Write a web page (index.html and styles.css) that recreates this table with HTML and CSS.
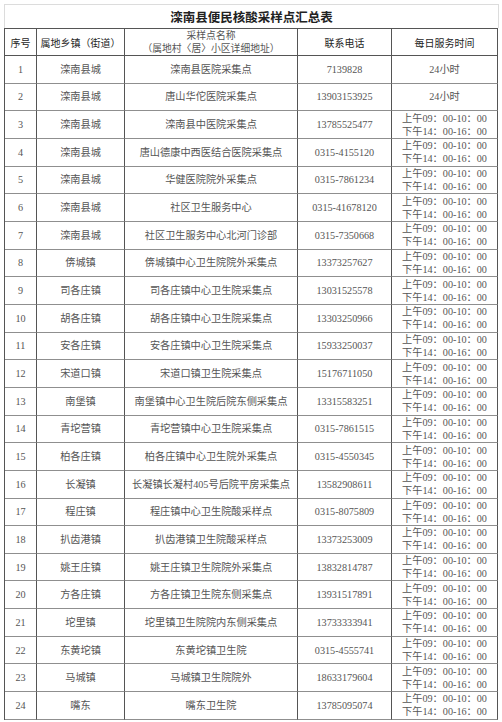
FILE: index.html
```html
<!DOCTYPE html>
<html lang="zh-CN">
<head>
<meta charset="utf-8">
<title>滦南县便民核酸采样点汇总表</title>
<link rel="stylesheet" href="styles.css">
</head>
<body>
<div class="sheet">
  <div class="title">滦南县便民核酸采样点汇总表</div>
  <div class="table">
    <div class="cell head">序号</div>
    <div class="cell head">属地乡镇（街道）</div>
    <div class="cell head stack light"><span>采样点名称</span><span>（属地村〈居〉小区详细地址）</span></div>
    <div class="cell head">联系电话</div>
    <div class="cell head">每日服务时间</div>

    <div class="cell">1</div><div class="cell">滦南县城</div><div class="cell">滦南县医院采集点</div><div class="cell">7139828</div><div class="cell">24小时</div>
    <div class="cell">2</div><div class="cell">滦南县城</div><div class="cell">唐山华佗医院采集点</div><div class="cell">13903153925</div><div class="cell">24小时</div>
    <div class="cell">3</div><div class="cell">滦南县城</div><div class="cell">滦南县中医院采集点</div><div class="cell">13785525477</div><div class="cell stack"><span>上午09：00-10：00</span><span>下午14：00-16：00</span></div>
    <div class="cell">4</div><div class="cell">滦南县城</div><div class="cell">唐山德康中西医结合医院采集点</div><div class="cell">0315-4155120</div><div class="cell stack"><span>上午09：00-10：00</span><span>下午14：00-16：00</span></div>
    <div class="cell">5</div><div class="cell">滦南县城</div><div class="cell">华健医院院外采集点</div><div class="cell">0315-7861234</div><div class="cell stack"><span>上午09：00-10：00</span><span>下午14：00-16：00</span></div>
    <div class="cell">6</div><div class="cell">滦南县城</div><div class="cell">社区卫生服务中心</div><div class="cell">0315-41678120</div><div class="cell stack"><span>上午09：00-10：00</span><span>下午14：00-16：00</span></div>
    <div class="cell">7</div><div class="cell">滦南县城</div><div class="cell">社区卫生服务中心北河门诊部</div><div class="cell">0315-7350668</div><div class="cell stack"><span>上午09：00-10：00</span><span>下午14：00-16：00</span></div>
    <div class="cell">8</div><div class="cell">倴城镇</div><div class="cell">倴城镇中心卫生院院外采集点</div><div class="cell">13373257627</div><div class="cell stack"><span>上午09：00-10：00</span><span>下午14：00-16：00</span></div>
    <div class="cell">9</div><div class="cell">司各庄镇</div><div class="cell">司各庄镇中心卫生院采集点</div><div class="cell">13031525578</div><div class="cell stack"><span>上午09：00-10：00</span><span>下午14：00-16：00</span></div>
    <div class="cell">10</div><div class="cell">胡各庄镇</div><div class="cell">胡各庄镇中心卫生院采集点</div><div class="cell">13303250966</div><div class="cell stack"><span>上午09：00-10：00</span><span>下午14：00-16：00</span></div>
    <div class="cell">11</div><div class="cell">安各庄镇</div><div class="cell">安各庄镇中心卫生院采集点</div><div class="cell">15933250037</div><div class="cell stack"><span>上午09：00-10：00</span><span>下午14：00-16：00</span></div>
    <div class="cell">12</div><div class="cell">宋道口镇</div><div class="cell">宋道口镇卫生院采集点</div><div class="cell">15176711050</div><div class="cell stack"><span>上午09：00-10：00</span><span>下午14：00-16：00</span></div>
    <div class="cell">13</div><div class="cell">南堡镇</div><div class="cell">南堡镇中心卫生院后院东侧采集点</div><div class="cell">13315583251</div><div class="cell stack"><span>上午09：00-10：00</span><span>下午14：00-16：00</span></div>
    <div class="cell">14</div><div class="cell">青坨营镇</div><div class="cell">青坨营镇中心卫生院采集点</div><div class="cell">0315-7861515</div><div class="cell stack"><span>上午09：00-10：00</span><span>下午14：00-16：00</span></div>
    <div class="cell">15</div><div class="cell">柏各庄镇</div><div class="cell">柏各庄镇中心卫生院外采集点</div><div class="cell">0315-4550345</div><div class="cell stack"><span>上午09：00-10：00</span><span>下午14：00-16：00</span></div>
    <div class="cell">16</div><div class="cell">长凝镇</div><div class="cell">长凝镇长凝村405号后院平房采集点</div><div class="cell">13582908611</div><div class="cell stack"><span>上午09：00-10：00</span><span>下午14：00-16：00</span></div>
    <div class="cell">17</div><div class="cell">程庄镇</div><div class="cell">程庄镇中心卫生院酸采样点</div><div class="cell">0315-8075809</div><div class="cell stack"><span>上午09：00-10：00</span><span>下午14：00-16：00</span></div>
    <div class="cell">18</div><div class="cell">扒齿港镇</div><div class="cell">扒齿港镇卫生院酸采样点</div><div class="cell">13373253009</div><div class="cell stack"><span>上午09：00-10：00</span><span>下午14：00-16：00</span></div>
    <div class="cell">19</div><div class="cell">姚王庄镇</div><div class="cell">姚王庄镇卫生院院外采集点</div><div class="cell">13832814787</div><div class="cell stack"><span>上午09：00-10：00</span><span>下午14：00-16：00</span></div>
    <div class="cell">20</div><div class="cell">方各庄镇</div><div class="cell">方各庄镇卫生院东侧采集点</div><div class="cell">13931517891</div><div class="cell stack"><span>上午09：00-10：00</span><span>下午14：00-16：00</span></div>
    <div class="cell">21</div><div class="cell">坨里镇</div><div class="cell">坨里镇卫生院院内东侧采集点</div><div class="cell">13733333941</div><div class="cell stack"><span>上午09：00-10：00</span><span>下午14：00-16：00</span></div>
    <div class="cell">22</div><div class="cell">东黄坨镇</div><div class="cell">东黄坨镇卫生院</div><div class="cell">0315-4555741</div><div class="cell stack"><span>上午09：00-10：00</span><span>下午14：00-16：00</span></div>
    <div class="cell">23</div><div class="cell">马城镇</div><div class="cell">马城镇卫生院院外</div><div class="cell">18633179604</div><div class="cell stack"><span>上午09：00-10：00</span><span>下午14：00-16：00</span></div>
    <div class="cell">24</div><div class="cell">嘴东</div><div class="cell">嘴东卫生院</div><div class="cell">13785095074</div><div class="cell stack"><span>上午09：00-10：00</span><span>下午14：00-16：00</span></div>
  </div>
</div>
</body>
</html>
```

FILE: styles.css
```css
html, body {
  margin: 0;
  padding: 0;
  background: #ffffff;
}

body {
  padding: 4px 0 0 4px;
  font-family: "Liberation Serif", "Noto Sans CJK SC", serif;
  color: #555555;
}

.sheet {
  width: 495px;
}

.title {
  box-sizing: border-box;
  width: 495px;
  height: 24px;
  border: 1px solid #dcdcdc;
  border-bottom: none;
  display: flex;
  align-items: center;
  justify-content: center;
  font-family: "Noto Sans CJK SC", sans-serif;
  font-weight: 700;
  font-size: 12.5px;
  color: #222222;
}

.table {
  display: grid;
  width: 494px;
  box-sizing: border-box;
  grid-template-columns: 32px 88px 173px 94px 106px;
  grid-template-rows: 27px;
  grid-auto-rows: 27.67px;
  border-left: 1px solid #555555;
  border-top: 1px solid #555555;
}

.cell {
  box-sizing: border-box;
  display: flex;
  align-items: center;
  justify-content: center;
  text-align: center;
  border-right: 1px solid #555555;
  border-bottom: 1px solid #8f8f8f;
  font-size: 10.2px;
  line-height: 13px;
  white-space: nowrap;
  overflow: hidden;
}

.head {
  font-family: "Noto Sans CJK SC", sans-serif;
  font-size: 10px;
  color: #262626;
  border-bottom-color: #555555;
}

.head.light {
  color: #555555;
  font-size: 9.8px;
}

.stack {
  flex-direction: column;
  line-height: 13px;
}
```
